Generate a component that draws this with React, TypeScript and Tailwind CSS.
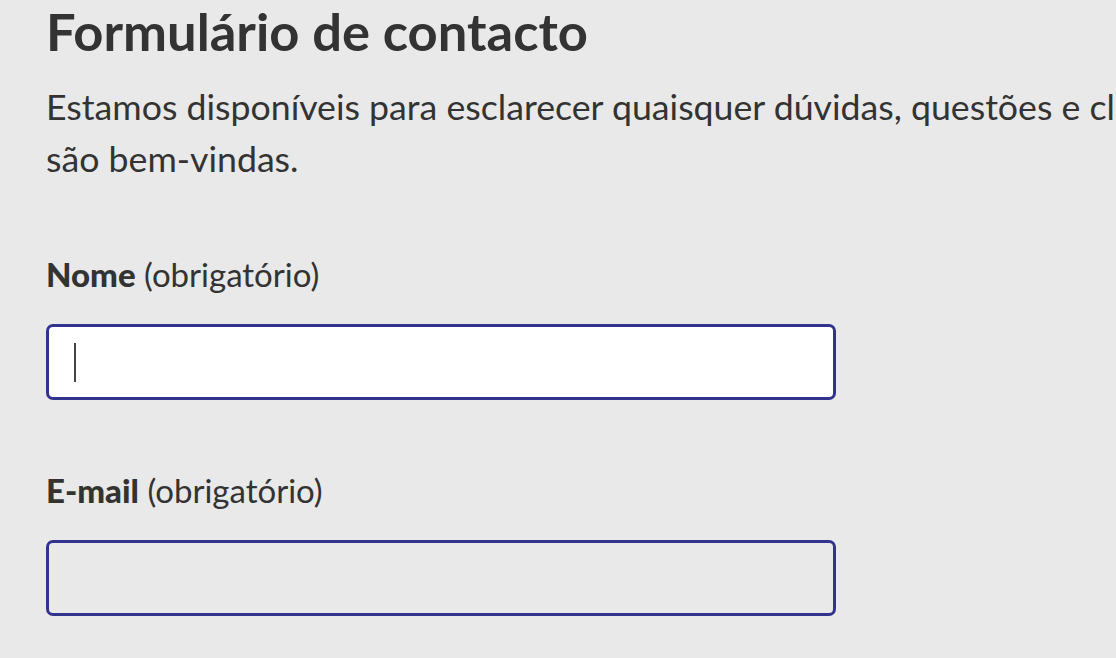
export default function App() {
  return (
    <div className="h-[658px] w-[1116px] overflow-hidden bg-[#e9e9e9] font-['Lato',sans-serif] text-[#333333]">
      <div className="w-[2000px] pl-[46px]">
        <h1 className="text-[52.5px] font-bold leading-[62px]">Formulário de contacto</h1>
        <p className="mt-[19px] whitespace-nowrap text-[35.7px] leading-[52px]">
          Estamos disponíveis para esclarecer quaisquer dúvidas, questões e clarificações. Sugestões e críticas também
          <br />
          são bem-vindas.
        </p>
        <form className="mt-[68px] flex flex-col">
          <label className="text-[33px] leading-[42px]">
            <span className="font-black">Nome</span> (obrigatório)
          </label>
          <div className="relative mt-[29px] w-[790px]">
            <input
              type="text"
              className="h-[76px] w-full rounded-[7px] border-[3px] border-[#33338f] bg-white px-6 text-[30px] caret-transparent outline-none"
            />
            <span className="absolute left-[28px] top-[19px] h-[39px] w-[2px] bg-[#444444]" />
          </div>
          <label className="mt-[69px] text-[33px] leading-[42px]">
            <span className="font-black">E-mail</span> (obrigatório)
          </label>
          <input
            type="email"
            className="mt-[29px] h-[76px] w-[790px] rounded-[7px] border-[3px] border-[#33338f] bg-transparent px-6 text-[30px] outline-none"
          />
        </form>
      </div>
    </div>
  );
}
